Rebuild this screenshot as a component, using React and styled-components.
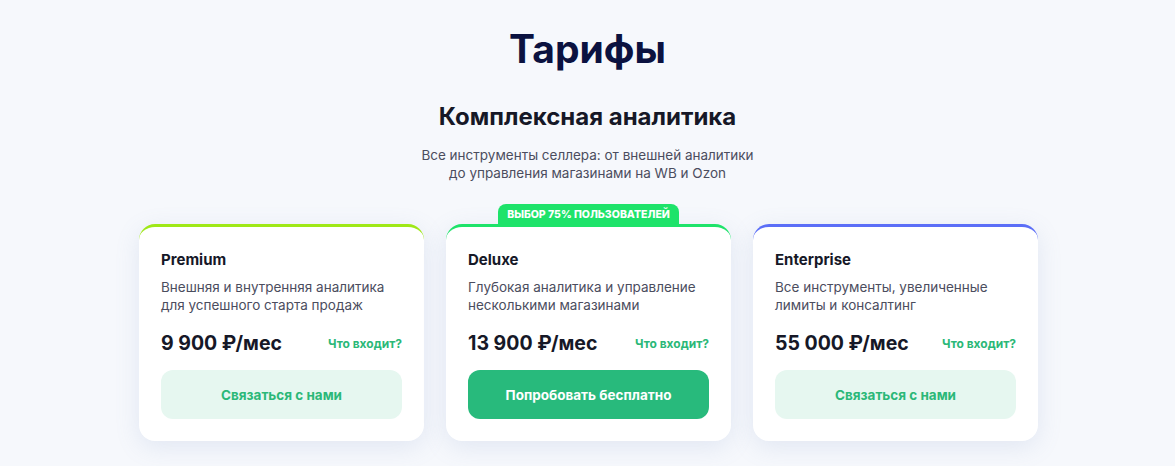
import React from 'react';
import styled, { createGlobalStyle } from 'styled-components';

const plans = [
  {
    name: 'Premium',
    text: 'Внешняя и внутренняя аналитика для успешного старта продаж',
    price: '9 900 ₽/мес',
    cta: 'Связаться с нами',
    accent: '#9fe817',
  },
  {
    name: 'Deluxe',
    text: 'Глубокая аналитика и управление несколькими магазинами',
    price: '13 900 ₽/мес',
    cta: 'Попробовать бесплатно',
    accent: '#1ee36a',
    badge: 'Выбор 75% пользователей',
    primary: true,
  },
  {
    name: 'Enterprise',
    text: 'Все инструменты, увеличенные лимиты и консалтинг',
    price: '55 000 ₽/мес',
    cta: 'Связаться с нами',
    accent: '#5b6ef7',
  },
];

function App() {
  return (
    <>
      <GlobalStyle />
      <Page>
        <Title>Тарифы</Title>
        <Subtitle>Комплексная аналитика</Subtitle>
        <Lead>
          Все инструменты селлера: от внешней аналитики
          <br />
          до управления магазинами на WB и Ozon
        </Lead>
        <Cards>
          {plans.map((plan) => (
            <Card key={plan.name} $accent={plan.accent}>
              {plan.badge && <Badge>{plan.badge}</Badge>}
              <PlanName>{plan.name}</PlanName>
              <PlanText>{plan.text}</PlanText>
              <PriceRow>
                <Price>{plan.price}</Price>
                <More href="#">Что входит?</More>
              </PriceRow>
              <Action $primary={plan.primary}>{plan.cta}</Action>
            </Card>
          ))}
        </Cards>
      </Page>
    </>
  );
}

const GlobalStyle = createGlobalStyle`
  body {
    margin: 0;
    background: #f6f8fc;
    font-family: Inter, "Noto Sans", sans-serif;
  }
`;

const Page = styled.div`
  display: flex;
  flex-direction: column;
  align-items: center;
  padding-top: 24px;
  padding-bottom: 25px;
`;

const Title = styled.h1`
  margin: 0;
  font-size: 39px;
  line-height: 50px;
  font-weight: 700;
  color: #0b1240;
`;

const Subtitle = styled.h2`
  margin: 28px 0 0;
  font-size: 24px;
  line-height: 30px;
  font-weight: 700;
  color: #161827;
`;

const Lead = styled.p`
  margin: 14px 0 0;
  font-size: 13.5px;
  line-height: 18px;
  text-align: center;
  color: #4b4d5e;
`;

const Cards = styled.div`
  display: grid;
  grid-template-columns: repeat(3, 285px);
  gap: 22px;
  margin-top: 42px;
  margin-left: 2px;
`;

const Card = styled.div`
  position: relative;
  display: flex;
  flex-direction: column;
  padding: 23px 22px 22px;
  background: #fff;
  border-radius: 16px;
  border-top: 3px solid ${(p) => p.$accent};
  box-shadow: 0 6px 24px rgba(120, 140, 190, 0.16);
`;

const Badge = styled.div`
  position: absolute;
  top: -23px;
  left: 52px;
  width: 181px;
  height: 21px;
  display: flex;
  align-items: center;
  justify-content: center;
  background: #1ee36a;
  border-radius: 8px 8px 0 0;
  color: #fff;
  font-size: 10.5px;
  font-weight: 800;
  text-transform: uppercase;
`;

const PlanName = styled.div`
  font-size: 15px;
  line-height: 20px;
  font-weight: 700;
  color: #161827;
`;

const PlanText = styled.div`
  margin-top: 8px;
  font-size: 13.5px;
  line-height: 18px;
  color: #4b4d5e;
`;

const PriceRow = styled.div`
  display: flex;
  align-items: center;
  justify-content: space-between;
  margin-top: 15px;
`;

const Price = styled.div`
  font-size: 19.5px;
  line-height: 28px;
  font-weight: 700;
  color: #161827;
`;

const More = styled.a`
  font-size: 12px;
  font-weight: 700;
  color: #2bb878;
  text-decoration: none;
`;

const Action = styled.button`
  margin-top: 13px;
  height: 49px;
  border: none;
  border-radius: 12px;
  font-family: inherit;
  font-size: 13.5px;
  font-weight: 700;
  cursor: pointer;
  background: ${(p) => (p.$primary ? '#28ba7c' : '#e6f7f0')};
  color: ${(p) => (p.$primary ? '#fff' : '#2bb878')};
`;

export default App;
